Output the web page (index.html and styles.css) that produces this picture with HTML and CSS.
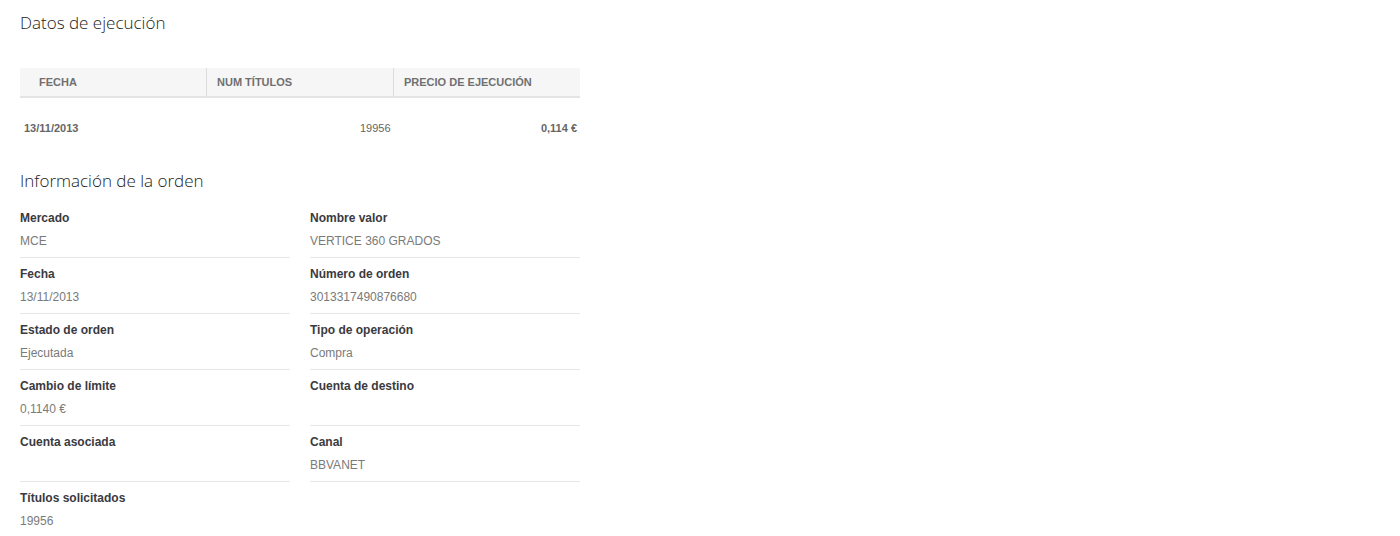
FILE: index.html
```html
<!DOCTYPE html>
<html lang="es">
<head>
<meta charset="utf-8">
<title>Detalle de orden</title>
<link rel="stylesheet" href="styles.css">
</head>
<body>
<main class="page">
  <h2 class="section-title">Datos de ejecución</h2>
  <table class="exec-table">
    <thead>
      <tr>
        <th class="col-fecha">Fecha</th>
        <th class="col-num">Num títulos</th>
        <th class="col-precio">Precio de ejecución</th>
      </tr>
    </thead>
    <tbody>
      <tr>
        <td class="cell-fecha">13/11/2013</td>
        <td class="cell-num">19956</td>
        <td class="cell-precio">0,114 €</td>
      </tr>
    </tbody>
  </table>

  <h2 class="section-title info-title">Información de la orden</h2>
  <dl class="info-grid">
    <div class="info-item"><dt>Mercado</dt><dd>MCE</dd></div>
    <div class="info-item"><dt>Nombre valor</dt><dd>VERTICE 360 GRADOS</dd></div>
    <div class="info-item"><dt>Fecha</dt><dd>13/11/2013</dd></div>
    <div class="info-item"><dt>Número de orden</dt><dd>3013317490876680</dd></div>
    <div class="info-item"><dt>Estado de orden</dt><dd>Ejecutada</dd></div>
    <div class="info-item"><dt>Tipo de operación</dt><dd>Compra</dd></div>
    <div class="info-item"><dt>Cambio de límite</dt><dd>0,1140 €</dd></div>
    <div class="info-item"><dt>Cuenta de destino</dt><dd></dd></div>
    <div class="info-item"><dt>Cuenta asociada</dt><dd></dd></div>
    <div class="info-item"><dt>Canal</dt><dd>BBVANET</dd></div>
    <div class="info-item"><dt>Títulos solicitados</dt><dd>19956</dd></div>
  </dl>
</main>
</body>
</html>
```

FILE: styles.css
```css
html, body {
  margin: 0;
  padding: 0;
  background: #ffffff;
}

body {
  font-family: "Liberation Sans", Arial, sans-serif;
  color: #333;
}

.page {
  width: 560px;
  padding: 11px 0 0 20px;
}

.section-title {
  margin: 0;
  font-family: "Open Sans", "Liberation Sans", sans-serif;
  font-weight: 300;
  font-size: 17px;
  line-height: 24px;
  color: #222;
}

.exec-table {
  margin-top: 33px;
  width: 560px;
  border-collapse: collapse;
  table-layout: fixed;
}

.exec-table th {
  background: #f6f6f6;
  height: 28px;
  padding: 0 0 0 10px;
  text-align: left;
  text-transform: uppercase;
  font-size: 11px;
  font-weight: bold;
  color: #707070;
  border-bottom: 2px solid #e4e4e4;
  border-left: 1px solid #dcdcdc;
}

.exec-table th.col-fecha {
  width: 167px;
  padding-left: 19px;
  border-left: none;
}

.exec-table th.col-num {
  width: 176px;
}

.exec-table td {
  height: 60px;
  font-size: 11px;
  color: #666;
  padding: 0 3px 0 4px;
}

.cell-fecha {
  font-weight: bold;
}

.cell-num {
  text-align: right;
  padding-right: 4px;
}

.cell-precio {
  text-align: right;
  font-weight: bold;
}

.info-title {
  margin-top: 11px;
}

.info-grid {
  margin: 9px 0 0;
  display: grid;
  grid-template-columns: 270px 270px;
  column-gap: 20px;
}

.info-item {
  border-bottom: 1px solid #e6e6e6;
  padding: 7px 0 7px;
  height: 41px;
}

.info-item dt {
  font-size: 12px;
  font-weight: bold;
  line-height: 18px;
  color: #3a3a40;
}

.info-item dd {
  margin: 5px 0 0;
  font-size: 12px;
  line-height: 18px;
  color: #7a7a7a;
}
```
